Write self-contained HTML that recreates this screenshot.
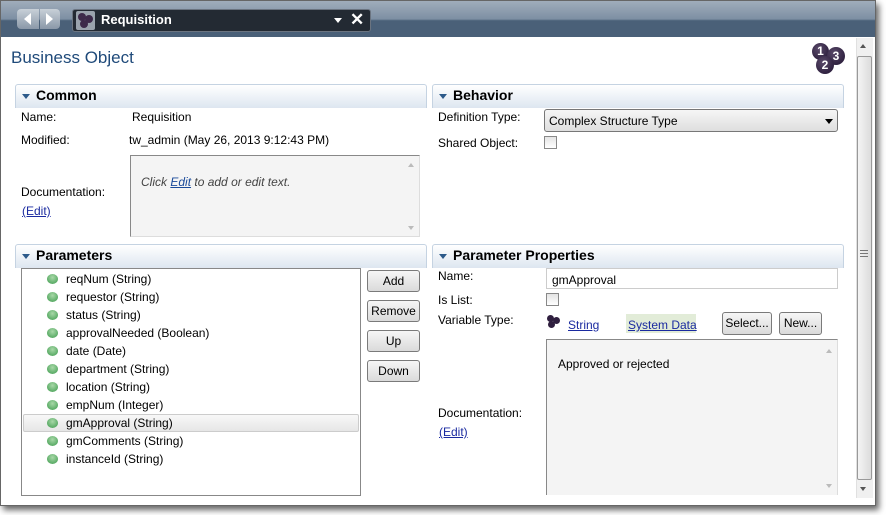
<!DOCTYPE html>
<html><head><style>
*{margin:0;padding:0;box-sizing:border-box}
body{width:886px;height:515px;background:#fff;font-family:"Liberation Sans",sans-serif;font-size:12px;color:#000;position:relative;overflow:hidden}
.a{position:absolute}
.hdr{position:absolute;height:24px;border:1px solid #c5d3e2;border-bottom:none;border-radius:3px 3px 0 0;background:linear-gradient(#ffffff,#dde6f0);font-weight:bold;font-size:14px;padding:2px 0 0 20px}
.hdr:before{content:"";position:absolute;left:6px;top:9px;border-left:4px solid transparent;border-right:4px solid transparent;border-top:5px solid #2d5a8a}
.btn{position:absolute;border:1px solid #7a7a7a;border-radius:3px;background:linear-gradient(#f6f6f6,#dadada);text-align:center;font-size:12px;line-height:20px}
.lnk{color:#1a2aa0;text-decoration:underline}
.dot{position:absolute;width:11px;height:10px;border-radius:50%;background:radial-gradient(circle at 50% 35%,#a8d8a8,#3c9a4c);left:47px}
.it{position:absolute;left:66px}
.cb{position:absolute;width:13px;height:13px;border:1px solid #888;background:linear-gradient(#e4e4e4,#fff)}
.ball{position:absolute;border-radius:50%;background:radial-gradient(circle at 40% 35%,#5a4a6a,#1f1230);color:#fff;font-size:12px;font-weight:bold;text-align:center}
</style></head><body>
<div class="a" style="left:0;top:0;width:876px;height:506px;box-shadow:3px 4px 6px rgba(0,0,0,.6);border:1px solid #666;background:#fff"></div>
<div class="a" style="left:1px;top:1px;width:874px;height:36px;background:linear-gradient(#a0adbb 0,#7d8fa3 50%,#4a6078 55%,#4a6078 100%)"></div>
<div class="a" style="left:17px;top:9px;width:22px;height:20px;border-radius:4px 0 0 4px;background:linear-gradient(#c8d0d8,#8a98a8)"></div>
<div class="a" style="left:40px;top:9px;width:20px;height:20px;border-radius:0 4px 4px 0;background:linear-gradient(#c8d0d8,#8a98a8)"></div>
<div class="a" style="left:24px;top:13px;border-top:6px solid transparent;border-bottom:6px solid transparent;border-right:7px solid #fff"></div>
<div class="a" style="left:46px;top:13px;border-top:6px solid transparent;border-bottom:6px solid transparent;border-left:7px solid #fff"></div>
<div class="a" style="left:72px;top:9px;width:299px;height:23px;background:#232a33;border:1px solid #6b7480;border-radius:3px"></div>
<div class="a" style="left:76px;top:11px;width:19px;height:19px;background:#9aa3ad;border-radius:2px"></div>
<div class="a" style="left:78px;top:13px;width:8px;height:8px;border-radius:50%;background:#3d2a4a"></div>
<div class="a" style="left:85px;top:15px;width:8px;height:8px;border-radius:50%;background:#3d2a4a"></div>
<div class="a" style="left:80px;top:20px;width:8px;height:8px;border-radius:50%;background:#3d2a4a"></div>
<div class="a" style="left:101px;top:12px;color:#fff;font-weight:bold;font-size:13px">Requisition</div>
<div class="a" style="left:334px;top:18px;border-left:4px solid transparent;border-right:4px solid transparent;border-top:5px solid #fff"></div>
<div class="a" style="left:350px;top:10px;color:#fff;font-size:17px;font-weight:bold">✕</div>
<div class="a" style="left:856px;top:38px;width:17px;height:460px;background:#f0f0f0;border-left:1px solid #e0e0e0"></div>
<div class="a" style="left:857px;top:56px;width:15px;height:424px;background:linear-gradient(90deg,#f4f4f4,#dcdcdc);border:1px solid #999;border-radius:2px"></div>
<div class="a" style="left:860px;top:44px;border-left:3px solid transparent;border-right:3px solid transparent;border-bottom:4px solid #555"></div>
<div class="a" style="left:860px;top:487px;border-left:3px solid transparent;border-right:3px solid transparent;border-top:4px solid #555"></div>
<div class="a" style="left:860px;top:250px;width:8px;height:7px;border-top:1px solid #777;border-bottom:1px solid #777"></div>
<div class="a" style="left:860px;top:253px;width:8px;height:1px;background:#777"></div>

<div class="a" style="left:11px;top:48px;font-size:17px;color:#1f4a7a">Business Object</div>
<div class="ball" style="left:812px;top:43px;width:17px;height:17px;line-height:17px">1</div>
<div class="ball" style="left:827px;top:47px;width:18px;height:18px;line-height:18px">3</div>
<div class="ball" style="left:816px;top:56px;width:18px;height:18px;line-height:18px">2</div>

<div class="hdr" style="left:15px;top:84px;width:412px">Common</div>
<div class="hdr" style="left:432px;top:84px;width:412px">Behavior</div>
<div class="a" style="left:21px;top:110px">Name:</div>
<div class="a" style="left:132px;top:110px">Requisition</div>
<div class="a" style="left:21px;top:133px">Modified:</div>
<div class="a" style="left:129px;top:133px">tw_admin (May 26, 2013 9:12:43 PM)</div>
<div class="a" style="left:21px;top:185px">Documentation:</div>
<div class="a lnk" style="left:22px;top:204px">(Edit)</div>
<div class="a" style="left:130px;top:155px;width:290px;height:82px;background:#f4f4f4;border:1px solid #888;border-right-color:#ddd;border-bottom-color:#ddd"></div>
<div class="a" style="left:141px;top:175px;font-style:italic;color:#444">Click <span class="lnk" style="color:#1a4a9a">Edit</span> to add or edit text.</div>
<div class="a" style="left:408px;top:163px;border-left:3px solid transparent;border-right:3px solid transparent;border-bottom:4px solid #bbb"></div>
<div class="a" style="left:408px;top:226px;border-left:3px solid transparent;border-right:3px solid transparent;border-top:4px solid #bbb"></div>

<div class="a" style="left:438px;top:110px">Definition Type:</div>
<div class="a" style="left:544px;top:109px;width:294px;height:23px;border:1px solid #777;border-radius:3px;background:linear-gradient(#f6f6f6,#dedede);padding:4px 0 0 4px">Complex Structure Type</div>
<div class="a" style="left:825px;top:119px;border-left:4px solid transparent;border-right:4px solid transparent;border-top:5px solid #000"></div>
<div class="a" style="left:438px;top:136px">Shared Object:</div>
<div class="cb" style="left:544px;top:136px"></div>

<div class="hdr" style="left:15px;top:244px;width:412px">Parameters</div>
<div class="hdr" style="left:432px;top:244px;width:412px">Parameter Properties</div>
<div class="a" style="left:21px;top:268px;width:340px;height:228px;border:1px solid #888"></div>
<div class="a" style="left:23px;top:414px;width:336px;height:18px;border:1px solid #ccc;border-radius:2px;background:linear-gradient(#f8f8f8,#e6e6e6)"></div>
<div class="dot" style="top:274px"></div><div class="it" style="top:272px">reqNum (String)</div>
<div class="dot" style="top:292px"></div><div class="it" style="top:290px">requestor (String)</div>
<div class="dot" style="top:310px"></div><div class="it" style="top:308px">status (String)</div>
<div class="dot" style="top:328px"></div><div class="it" style="top:326px">approvalNeeded (Boolean)</div>
<div class="dot" style="top:346px"></div><div class="it" style="top:344px">date (Date)</div>
<div class="dot" style="top:364px"></div><div class="it" style="top:362px">department (String)</div>
<div class="dot" style="top:382px"></div><div class="it" style="top:380px">location (String)</div>
<div class="dot" style="top:400px"></div><div class="it" style="top:398px">empNum (Integer)</div>
<div class="dot" style="top:418px"></div><div class="it" style="top:416px">gmApproval (String)</div>
<div class="dot" style="top:436px"></div><div class="it" style="top:434px">gmComments (String)</div>
<div class="dot" style="top:454px"></div><div class="it" style="top:452px">instanceId (String)</div>
<div class="btn" style="left:367px;top:270px;width:53px;height:22px">Add</div>
<div class="btn" style="left:367px;top:300px;width:53px;height:22px">Remove</div>
<div class="btn" style="left:367px;top:330px;width:53px;height:22px">Up</div>
<div class="btn" style="left:367px;top:360px;width:53px;height:22px">Down</div>

<div class="a" style="left:438px;top:269px">Name:</div>
<div class="a" style="left:546px;top:268px;width:292px;height:21px;border:1px solid #ccc;padding:4px 0 0 5px">gmApproval</div>
<div class="a" style="left:438px;top:293px">Is List:</div>
<div class="cb" style="left:546px;top:293px"></div>
<div class="a" style="left:438px;top:313px">Variable Type:</div>
<div class="a" style="left:547px;top:315px;width:7px;height:7px;border-radius:50%;background:#2f1f3f"></div>
<div class="a" style="left:553px;top:317px;width:7px;height:7px;border-radius:50%;background:#2f1f3f"></div>
<div class="a" style="left:548px;top:321px;width:7px;height:7px;border-radius:50%;background:#2f1f3f"></div>
<div class="a lnk" style="left:568px;top:318px">String</div>
<div class="a" style="left:626px;top:314px;width:70px;height:19px;background:#e2ecd8"></div>
<div class="a lnk" style="left:628px;top:318px">System Data</div>
<div class="btn" style="left:722px;top:312px;width:50px;height:23px">Select...</div>
<div class="btn" style="left:779px;top:312px;width:43px;height:23px">New...</div>
<div class="a" style="left:546px;top:339px;width:292px;height:156px;background:#f4f4f4;border:1px solid #888;border-right-color:#ddd;border-bottom:none"></div>
<div class="a" style="left:558px;top:357px">Approved or rejected</div>
<div class="a" style="left:826px;top:349px;border-left:3px solid transparent;border-right:3px solid transparent;border-bottom:4px solid #bbb"></div>
<div class="a" style="left:826px;top:484px;border-left:3px solid transparent;border-right:3px solid transparent;border-top:4px solid #bbb"></div>
<div class="a" style="left:438px;top:406px">Documentation:</div>
<div class="a lnk" style="left:439px;top:425px">(Edit)</div>
</body></html>
